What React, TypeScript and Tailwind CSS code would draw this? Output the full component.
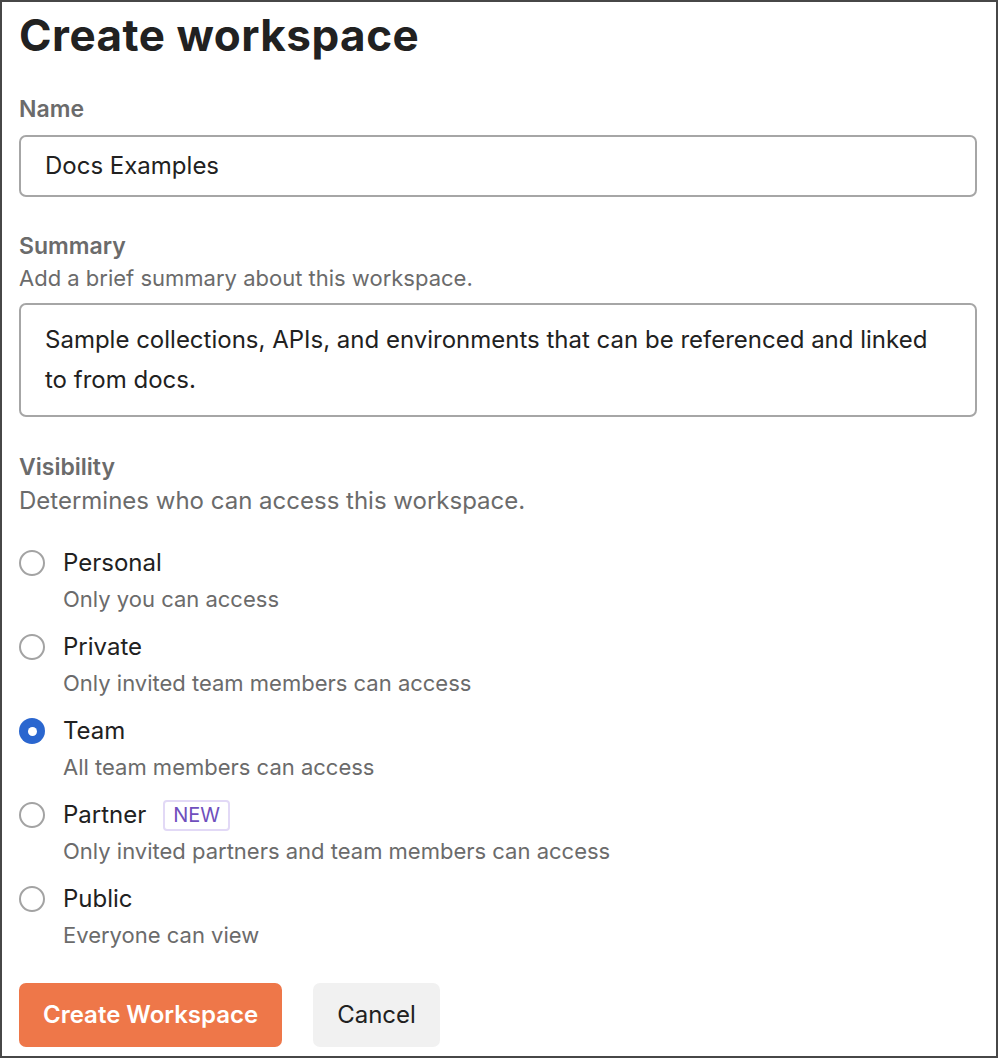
import React from 'react';

const options = [
  { id: 'personal', label: 'Personal', desc: 'Only you can access' },
  { id: 'private', label: 'Private', desc: 'Only invited team members can access' },
  { id: 'team', label: 'Team', desc: 'All team members can access' },
  { id: 'partner', label: 'Partner', desc: 'Only invited partners and team members can access', badge: 'NEW' },
  { id: 'public', label: 'Public', desc: 'Everyone can view' },
];

const Radio = ({ checked }: { checked: boolean }) =>
  checked ? (
    <span className="flex h-[26px] w-[26px] shrink-0 items-center justify-center rounded-full bg-[#2a66cf]">
      <span className="h-[9px] w-[9px] rounded-full bg-white" />
    </span>
  ) : (
    <span className="h-[26px] w-[26px] shrink-0 rounded-full border-2 border-[#a3a3a3] bg-white" />
  );

const App = () => {
  const [selected, setSelected] = React.useState('team');

  return (
    <div className="h-[1058px] w-[998px] border-2 border-[#474747] bg-white pl-[17px] pr-[19px] pt-[7px] font-['Inter',sans-serif] text-[#212121]">
      {/* Header */}
      <h1 className="text-[44px] font-bold leading-[52px] tracking-[0.5px]">Create workspace</h1>

      {/* Name */}
      <div className="mt-[33px] text-[23px] font-semibold leading-[30px] text-[#6b6b6b]">Name</div>
      <div className="mt-[11px] flex h-[62px] items-center rounded-[7px] border-2 border-[#a6a6a6] px-[24px] text-[24px]">
        Docs Examples
      </div>

      {/* Summary */}
      <div className="mt-[33px] text-[23px] font-semibold leading-[32px] text-[#6b6b6b]">Summary</div>
      <div className="text-[22px] leading-[32px] text-[#6b6b6b]">Add a brief summary about this workspace.</div>
      <div className="mt-[9px] h-[114px] rounded-[7px] border-2 border-[#a6a6a6] px-[24px] py-[15px] text-[24px] leading-[40px]">
        Sample collections, APIs, and environments that can be referenced and linked
        <br />
        to from docs.
      </div>

      {/* Visibility */}
      <div className="mt-[33px] text-[23px] font-semibold leading-[34px] text-[#6b6b6b]">Visibility</div>
      <div className="text-[24px] leading-[34px] text-[#6b6b6b]">Determines who can access this workspace.</div>

      <div className="mt-[27px] flex flex-col gap-[12px]">
        {options.map((o) => (
          <div key={o.id} className="cursor-pointer" onClick={() => setSelected(o.id)}>
            <div className="flex h-[36px] items-center">
              <Radio checked={selected === o.id} />
              <span className="ml-[18px] text-[24px] leading-[36px]">{o.label}</span>
              {o.badge && (
                <span className="ml-[17px] flex h-[31px] items-center rounded-[4px] border-2 border-[#e2d9f6] px-[8px] text-[20px] text-[#6f4fbd]">
                  {o.badge}
                </span>
              )}
            </div>
            <div className="pl-[44px] text-[22px] leading-[36px] text-[#6b6b6b]">{o.desc}</div>
          </div>
        ))}
      </div>

      {/* Actions */}
      <div className="mt-[30px] flex gap-[31px]">
        <button className="flex h-[64px] items-center rounded-[7px] bg-[#ee7749] px-[24px] text-[24px] font-semibold text-white">
          Create Workspace
        </button>
        <button className="flex h-[64px] items-center rounded-[7px] bg-[#f1f1f1] px-[24px] text-[24px] text-[#212121]">
          Cancel
        </button>
      </div>
    </div>
  );
};

export default App;
